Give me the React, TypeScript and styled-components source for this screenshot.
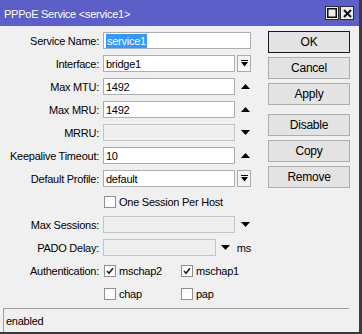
import styled, { createGlobalStyle } from 'styled-components';

const GlobalStyle = createGlobalStyle`
  html, body {
    margin: 0;
    padding: 0;
    background: #f0f0f0;
  }
  * {
    box-sizing: border-box;
  }
`;

const Window = styled.div`
  width: 362px;
  height: 334px;
  display: flex;
  flex-direction: column;
  background: #f0f0f0;
  border-right: 3px solid #3a3a3a;
  border-bottom: 2px solid #3a3a3a;
  font-family: 'Liberation Sans', Arial, sans-serif;
  font-size: 11px;
  letter-spacing: -0.25px;
  color: #000;
`;

const TitleBar = styled.div`
  height: 26px;
  flex-shrink: 0;
  display: flex;
  align-items: center;
  justify-content: space-between;
  padding: 0 5px 0 4px;
  background: #5b5fc7;
  color: #fff;
`;

const TitleText = styled.span`
  padding-top: 1px;
`;

const TitleButtons = styled.div`
  display: flex;
  gap: 1px;
`;

const TitleButton = styled.div`
  width: 14px;
  height: 14px;
  display: flex;
  align-items: center;
  justify-content: center;
  background: #ececec;
  border: 1px solid #2a2a2a;
`;

const Body = styled.div`
  flex: 1;
  display: flex;
  align-items: flex-start;
`;

const Form = styled.div`
  width: 268px;
  padding-top: 3px;
  display: grid;
  grid-template-columns: 99px 148px;
  grid-auto-rows: 23px;
  column-gap: 4px;
  align-items: center;
`;

const Label = styled.div`
  text-align: right;
  white-space: nowrap;
`;

const Field = styled.div`
  display: flex;
  align-items: center;
  height: 17px;
`;

const TextBox = styled.div<{ $disabled?: boolean }>`
  flex: 1;
  height: 17px;
  display: flex;
  align-items: center;
  padding-left: 2px;
  background: ${(p) => (p.$disabled ? '#efefef' : '#fff')};
  border: 1px solid ${(p) => (p.$disabled ? '#c4c4c4' : '#abadb3')};
  white-space: nowrap;
  overflow: hidden;
`;

const Selected = styled.span`
  background: #3399ff;
  color: #fff;
  padding: 0 1px;
  line-height: 14px;
`;

const DropButton = styled.div`
  width: 14px;
  height: 17px;
  margin-left: 2px;
  display: flex;
  align-items: center;
  justify-content: center;
  background: #f4f4f4;
  border: 1px solid #acacac;
`;

const ArrowSlot = styled.div<{ $width?: number }>`
  width: ${(p) => p.$width ?? 16}px;
  height: 17px;
  display: flex;
  align-items: center;
  justify-content: flex-end;
  padding-right: 1px;
`;

const Unit = styled.span`
  margin-left: 6px;
`;

const CheckRow = styled.div`
  display: grid;
  grid-template-columns: 77px auto;
  align-items: center;
`;

const CheckItem = styled.label`
  display: flex;
  align-items: center;
  gap: 3px;
  margin-left: 1px;
  white-space: nowrap;
`;

const Box = styled.span`
  width: 12px;
  height: 12px;
  display: flex;
  align-items: center;
  justify-content: center;
  background: #fff;
  border: 1px solid #8f8f8f;
`;

const ButtonColumn = styled.div`
  width: 82px;
  padding-top: 5px;
  display: flex;
  flex-direction: column;
  gap: 4px;
`;

const Button = styled.div<{ $default?: boolean; $gapBefore?: boolean }>`
  height: 22px;
  display: flex;
  align-items: center;
  justify-content: center;
  margin-top: ${(p) => (p.$gapBefore ? '5px' : '0')};
  background: #e3e3e3;
  border: 1px solid ${(p) => (p.$default ? '#1a1a1a' : '#adadad')};
  font-size: 12px;
`;

const StatusBar = styled.div`
  height: 24px;
  flex-shrink: 0;
  margin: 0 10px 0 3px;
  display: flex;
  align-items: center;
  padding-left: 2px;
  border-top: 1px solid #a0a0a0;
  border-left: 1px solid #a0a0a0;
`;

const UpArrow = () => (
  <svg width="9" height="5" viewBox="0 0 9 5">
    <path d="M0 5 L4.5 0 L9 5 Z" fill="#000" />
  </svg>
);

const DownArrow = () => (
  <svg width="9" height="5" viewBox="0 0 9 5">
    <path d="M0 0 L9 0 L4.5 5 Z" fill="#000" />
  </svg>
);

const DropIcon = () => (
  <svg width="7" height="7" viewBox="0 0 7 7">
    <rect x="0" y="0" width="7" height="1" fill="#000" />
    <path d="M0 2 L7 2 L3.5 6.5 Z" fill="#000" />
  </svg>
);

const CheckMark = () => (
  <svg width="8" height="8" viewBox="0 0 8 8">
    <path d="M1 4 L3 6.2 L7 1.2" stroke="#1e1e1e" strokeWidth="1.6" fill="none" />
  </svg>
);

const Check = ({ checked, text }: { checked?: boolean; text: string }) => (
  <CheckItem>
    <Box>{checked && <CheckMark />}</Box>
    {text}
  </CheckItem>
);

export default function App() {
  return (
    <>
      <GlobalStyle />
      <Window>
        <TitleBar>
          <TitleText>PPPoE Service &lt;service1&gt;</TitleText>
          <TitleButtons>
            <TitleButton>
              <svg width="10" height="10" viewBox="0 0 10 10">
                <rect x="0.75" y="0.75" width="8.5" height="8.5" fill="none" stroke="#111" strokeWidth="1.5" />
              </svg>
            </TitleButton>
            <TitleButton>
              <svg width="9" height="9" viewBox="0 0 9 9">
                <path d="M1 1 L8 8 M8 1 L1 8" stroke="#111" strokeWidth="2" />
              </svg>
            </TitleButton>
          </TitleButtons>
        </TitleBar>
        <Body>
          <Form>
            <Label>Service Name:</Label>
            <Field>
              <TextBox>
                <Selected>service1</Selected>
              </TextBox>
            </Field>

            <Label>Interface:</Label>
            <Field>
              <TextBox>bridge1</TextBox>
              <DropButton>
                <DropIcon />
              </DropButton>
            </Field>

            <Label>Max MTU:</Label>
            <Field>
              <TextBox>1492</TextBox>
              <ArrowSlot>
                <UpArrow />
              </ArrowSlot>
            </Field>

            <Label>Max MRU:</Label>
            <Field>
              <TextBox>1492</TextBox>
              <ArrowSlot>
                <UpArrow />
              </ArrowSlot>
            </Field>

            <Label>MRRU:</Label>
            <Field>
              <TextBox $disabled />
              <ArrowSlot>
                <DownArrow />
              </ArrowSlot>
            </Field>

            <Label>Keepalive Timeout:</Label>
            <Field>
              <TextBox>10</TextBox>
              <ArrowSlot>
                <UpArrow />
              </ArrowSlot>
            </Field>

            <Label>Default Profile:</Label>
            <Field>
              <TextBox>default</TextBox>
              <DropButton>
                <DropIcon />
              </DropButton>
            </Field>

            <Label />
            <Field>
              <Check text="One Session Per Host" />
            </Field>

            <Label>Max Sessions:</Label>
            <Field>
              <TextBox $disabled />
              <ArrowSlot>
                <DownArrow />
              </ArrowSlot>
            </Field>

            <Label>PADO Delay:</Label>
            <Field>
              <TextBox $disabled />
              <ArrowSlot $width={15}>
                <DownArrow />
              </ArrowSlot>
              <Unit>ms</Unit>
            </Field>

            <Label>Authentication:</Label>
            <CheckRow>
              <Check checked text="mschap2" />
              <Check checked text="mschap1" />
            </CheckRow>

            <Label />
            <CheckRow>
              <Check text="chap" />
              <Check text="pap" />
            </CheckRow>
          </Form>
          <ButtonColumn>
            <Button $default>OK</Button>
            <Button>Cancel</Button>
            <Button>Apply</Button>
            <Button $gapBefore>Disable</Button>
            <Button>Copy</Button>
            <Button>Remove</Button>
          </ButtonColumn>
        </Body>
        <StatusBar>enabled</StatusBar>
      </Window>
    </>
  );
}
